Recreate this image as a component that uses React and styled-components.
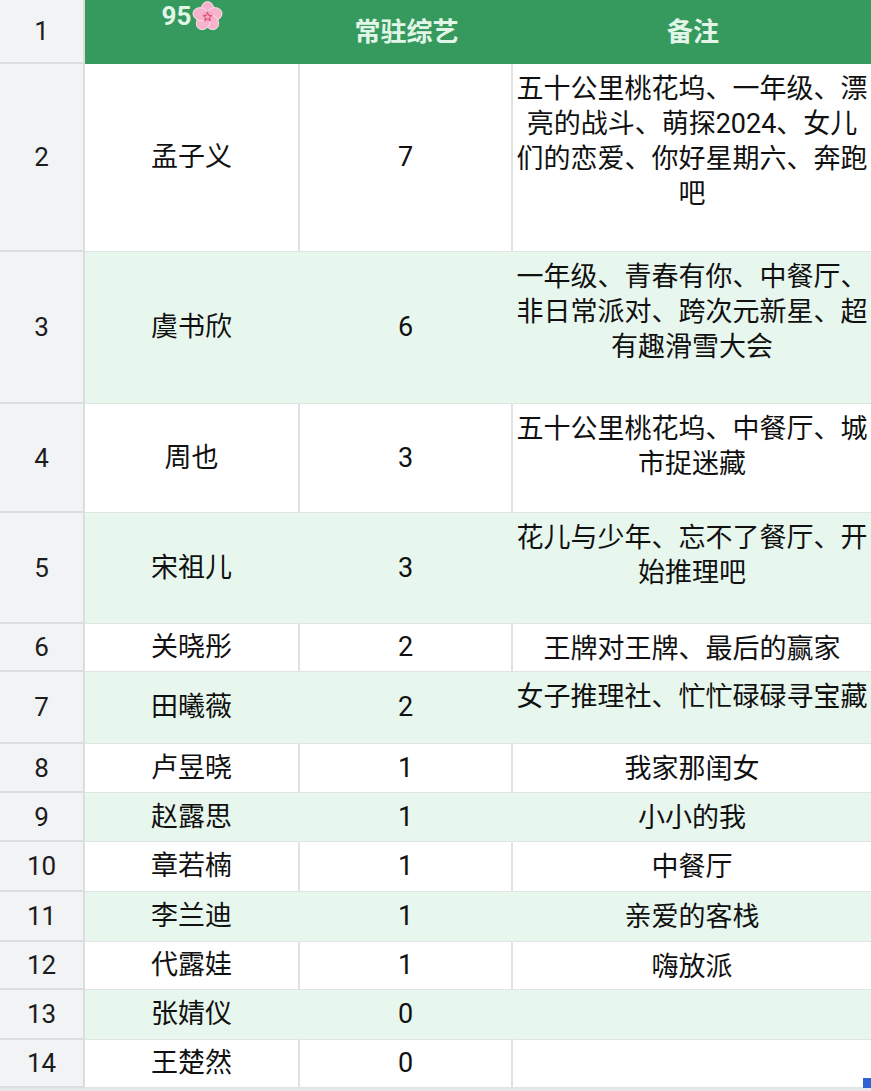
import React from "react";
import styled, { createGlobalStyle } from "styled-components";

const GlobalStyle = createGlobalStyle`
    html, body {
        margin: 0;
        padding: 0;
        overflow: hidden;
        background: #e6e7e9;
    }
    body {
        font-family: Roboto, "Noto Sans CJK SC", sans-serif;
        color: #111;
    }
`;

const Sheet = styled.div`
    position: relative;
    width: 873px;
    display: flex;
    flex-direction: column;
`;

const Row = styled.div`
    display: grid;
    grid-template-columns: 85px 215px 213px 360px;
    height: ${(p) => p.h}px;
    background-color: ${(p) => (p.$striped ? "#e8f7ee" : "#fff")};
`;

const RowNum = styled.div`
    display: flex;
    align-items: center;
    justify-content: center;
    box-sizing: border-box;
    background-color: #f2f3f5;
    border-right: 2px solid #dcdddf;
    border-bottom: 2px solid #dcdddf;
    font-size: 26px;
    color: #1c1c1c;
`;

const Cell = styled.div`
    display: flex;
    align-items: center;
    justify-content: center;
    box-sizing: border-box;
    border-right: 2px solid ${(p) => (p.$striped ? "#e8f7ee" : "#e1e2e3")};
    border-bottom: 1px solid #e0e4e2;
    font-size: 27px;
    line-height: 35px;
`;

const NoteCell = styled(Cell)`
    align-items: flex-start;
    padding: 8px 2px 0;
    text-align: center;
`;

const HeadCell = styled.div`
    display: flex;
    align-items: ${(p) => (p.$top ? "flex-start" : "center")};
    justify-content: center;
    box-sizing: border-box;
    background-color: #369a5f;
    color: #e2f6e8;
    font-size: 26px;
    font-weight: 700;
    line-height: 30px;
    padding-top: ${(p) => (p.$top ? "1px" : "0")};
`;

const Blossom = styled.svg`
    width: 31px;
    height: 31px;
    margin-left: 1px;
`;

const Handle = styled.div`
    position: absolute;
    right: 1px;
    bottom: 0;
    width: 9px;
    height: 10px;
    background-color: #2f63d2;
`;

const Footer = styled.div`
    height: 3px;
    background: #e6e7e9;
`;

const CherryBlossom = () => (
    <Blossom viewBox="0 0 30 30">
        {[0, 72, 144, 216, 288].map((a) => (
            <ellipse
                key={a}
                cx="15"
                cy="8"
                rx="6.3"
                ry="7.5"
                fill="#f6b3cb"
                stroke="#fde3ec"
                strokeWidth="0.8"
                transform={`rotate(${a} 15 15)`}
            />
        ))}
        <circle cx="15" cy="15" r="5.5" fill="#f8a7c2" />
        <polygon
            points="15,11 16.2,14 19,14.2 16.8,16 17.6,19 15,17.2 12.4,19 13.2,16 11,14.2 13.8,14"
            fill="none"
            stroke="#d23d6e"
            strokeWidth="0.9"
        />
    </Blossom>
);

const rows = [
    { h: 188, name: "孟子义", count: 7, note: "五十公里桃花坞、一年级、漂亮的战斗、萌探2024、女儿们的恋爱、你好星期六、奔跑吧" },
    { h: 152, name: "虞书欣", count: 6, note: "一年级、青春有你、中餐厅、非日常派对、跨次元新星、超有趣滑雪大会" },
    { h: 109, name: "周也", count: 3, note: "五十公里桃花坞、中餐厅、城市捉迷藏" },
    { h: 111, name: "宋祖儿", count: 3, note: "花儿与少年、忘不了餐厅、开始推理吧" },
    { h: 48, name: "关晓彤", count: 2, note: "王牌对王牌、最后的赢家" },
    { h: 72, name: "田曦薇", count: 2, note: "女子推理社、忙忙碌碌寻宝藏" },
    { h: 49, name: "卢昱晓", count: 1, note: "我家那闺女" },
    { h: 49, name: "赵露思", count: 1, note: "小小的我" },
    { h: 50, name: "章若楠", count: 1, note: "中餐厅" },
    { h: 50, name: "李兰迪", count: 1, note: "亲爱的客栈" },
    { h: 48, name: "代露娃", count: 1, note: "嗨放派" },
    { h: 50, name: "张婧仪", count: 0, note: "" },
    { h: 48, name: "王楚然", count: 0, note: "" },
];

export default function App() {
    return (
        <>
            <GlobalStyle />
            <Sheet>
                <Row h={64}>
                    <RowNum>1</RowNum>
                    <HeadCell $top>
                        95
                        <CherryBlossom />
                    </HeadCell>
                    <HeadCell>常驻综艺</HeadCell>
                    <HeadCell>备注</HeadCell>
                </Row>
                {rows.map((r, i) => {
                    const striped = i % 2 === 1;
                    return (
                        <Row key={r.name} h={r.h} $striped={striped}>
                            <RowNum>{i + 2}</RowNum>
                            <Cell $striped={striped}>{r.name}</Cell>
                            <Cell $striped={striped}>{r.count}</Cell>
                            <NoteCell $striped={striped}>{r.note}</NoteCell>
                        </Row>
                    );
                })}
                <Handle />
            </Sheet>
            <Footer />
        </>
    );
}
